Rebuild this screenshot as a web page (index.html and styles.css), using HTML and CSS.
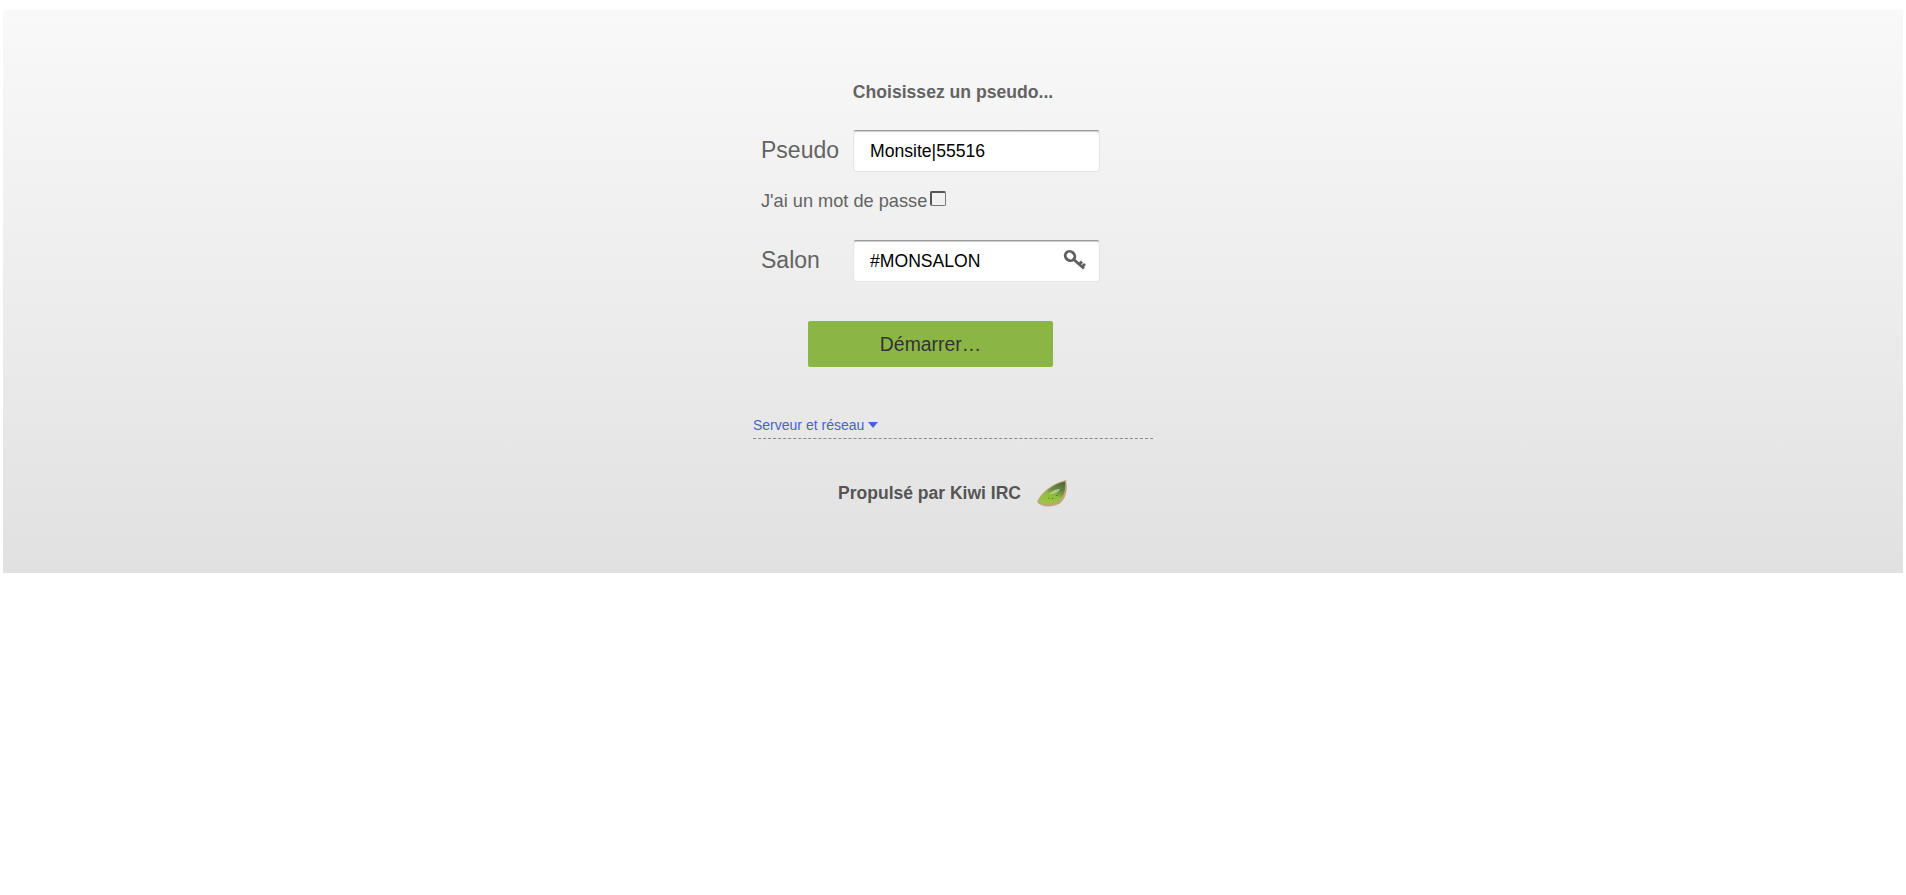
FILE: index.html
```html
<!DOCTYPE html>
<html lang="fr">
<head>
    <meta charset="UTF-8">
    <title>Kiwi IRC</title>
    <link rel="stylesheet" href="styles.css">
</head>
<body>
    <div class="panel">
        <div class="content">
            <h2 class="greeting">Choisissez un pseudo...</h2>
            <form class="login">
                <div class="form-row">
                    <label for="nick">Pseudo</label>
                    <input type="text" id="nick" value="Monsite|55516">
                </div>
                <div class="password-row">
                    <label for="usePass">J'ai un mot de passe</label>
                    <span class="check" id="usePass"></span>
                </div>
                <div class="form-row">
                    <label for="channel">Salon</label>
                    <div class="input-wrap">
                        <input type="text" id="channel" value="#MONSALON">
                        <svg class="key" width="24" height="22" viewBox="0 0 24 22">
                            <ellipse cx="7" cy="7" rx="5" ry="4.5" transform="rotate(40 7 7)" fill="none" stroke="#5f5f5f" stroke-width="2.8"/>
                            <path d="M11 10.8 L21 19.5 M16.2 15.2 L19 12.6 M19 17.7 L22 15" fill="none" stroke="#5f5f5f" stroke-width="2.8"/>
                        </svg>
                    </div>
                </div>
                <button type="button" class="start">Démarrer…</button>
            </form>
            <div class="server-toggle">
                <a href="#">Serveur et réseau</a><span class="caret"></span>
            </div>
            <div class="powered">
                <span>Propulsé par Kiwi IRC</span>
                <svg class="kiwi" width="32" height="28" viewBox="0 0 32 28">
                    <defs>
                        <linearGradient id="flesh" x1="0.75" y1="0" x2="0.35" y2="1">
                            <stop offset="0" stop-color="#4f6a3a"/>
                            <stop offset="0.4" stop-color="#6f8f42"/>
                            <stop offset="0.6" stop-color="#8fbd3e"/>
                            <stop offset="1" stop-color="#9cc648"/>
                        </linearGradient>
                    </defs>
                    <path d="M1 23 C5 13 17 4 30 1 C32 11 30 20 23 25 C15 29 5 28 1 23 Z" fill="#bfa677"/>
                    <path d="M2.5 22.3 C6 14 17 5 29 2.5 C30 11 27.5 18.5 21.5 22.8 C14 26 6.5 25.5 2.5 22.3 Z" fill="url(#flesh)"/>
                    <path d="M13 15 C17 11 21 9.5 24 10 C23 13 19 15.5 13 15 Z" fill="#c3d69a" opacity="0.75"/>
                    <circle cx="13" cy="19" r="0.6" fill="#3c4a22"/>
                    <circle cx="16.5" cy="19.5" r="0.6" fill="#3c4a22"/>
                    <circle cx="21" cy="16.5" r="0.6" fill="#3c4a22"/>
                    <circle cx="25" cy="11" r="0.6" fill="#3c4a22"/>
                </svg>
            </div>
        </div>
    </div>
</body>
</html>
```

FILE: styles.css
```css
html, body {
    margin: 0;
    padding: 0;
    background: #fff;
}
body {
    padding: 10px 3px 0;
    font-family: "Liberation Sans", Arial, sans-serif;
    color: #636363;
}
.panel {
    height: 563px;
    background: linear-gradient(to bottom, #f9f9f9, #e1e1e1);
}
.content {
    width: 400px;
    margin: 0 auto;
    padding-top: 72px;
}
.greeting {
    margin: 0;
    font-size: 17.6px;
    line-height: 20px;
    text-align: center;
}
.login {
    padding-left: 8px;
}
.form-row {
    display: flex;
    align-items: center;
}
.form-row label {
    width: 92px;
    padding-bottom: 2px;
    font-size: 23px;
}
.form-row:first-child {
    margin-top: 28px;
}
input[type="text"] {
    width: 247px;
    height: 42px;
    padding: 0 16px;
    box-sizing: border-box;
    border: 1px solid #e6e6e6;
    border-top: 1px solid #999;
    border-radius: 3px;
    box-shadow: inset 0 1px 1px rgba(0, 0, 0, 0.2);
    background: #fff;
    color: #000;
    font-family: inherit;
    font-size: 17.6px;
}
.input-wrap {
    position: relative;
    display: flex;
}
.key {
    position: absolute;
    top: 9px;
    right: 13px;
}
.password-row {
    display: flex;
    align-items: flex-start;
    margin: 18px 0 28px;
    font-size: 18.2px;
    line-height: 22px;
}
.check {
    width: 16px;
    height: 15px;
    margin: 1px 0 0 3px;
    box-sizing: border-box;
    border: 2px solid #555;
    border-right: 1px solid #777;
    border-bottom: 1px solid #777;
    border-radius: 2px;
}
.start {
    display: block;
    width: 245px;
    height: 46px;
    margin: 39px 0 0 47px;
    border: none;
    border-radius: 2px;
    background: #8bb646;
    color: #333;
    font-family: inherit;
    font-size: 19.4px;
}
.server-toggle {
    display: flex;
    align-items: center;
    margin-top: 50px;
    padding-bottom: 5px;
    border-bottom: 1px dashed #8a8a8a;
    font-size: 14px;
    line-height: 16px;
}
.server-toggle a {
    color: #4a63c8;
    text-decoration: none;
}
.caret {
    margin-left: 4px;
    border-left: 5px solid transparent;
    border-right: 5px solid transparent;
    border-top: 6px solid #3f66d6;
}
.powered {
    display: flex;
    align-items: center;
    justify-content: center;
    gap: 15px;
    margin-top: 40px;
    font-size: 17.5px;
    font-weight: bold;
    color: #555;
}
```
